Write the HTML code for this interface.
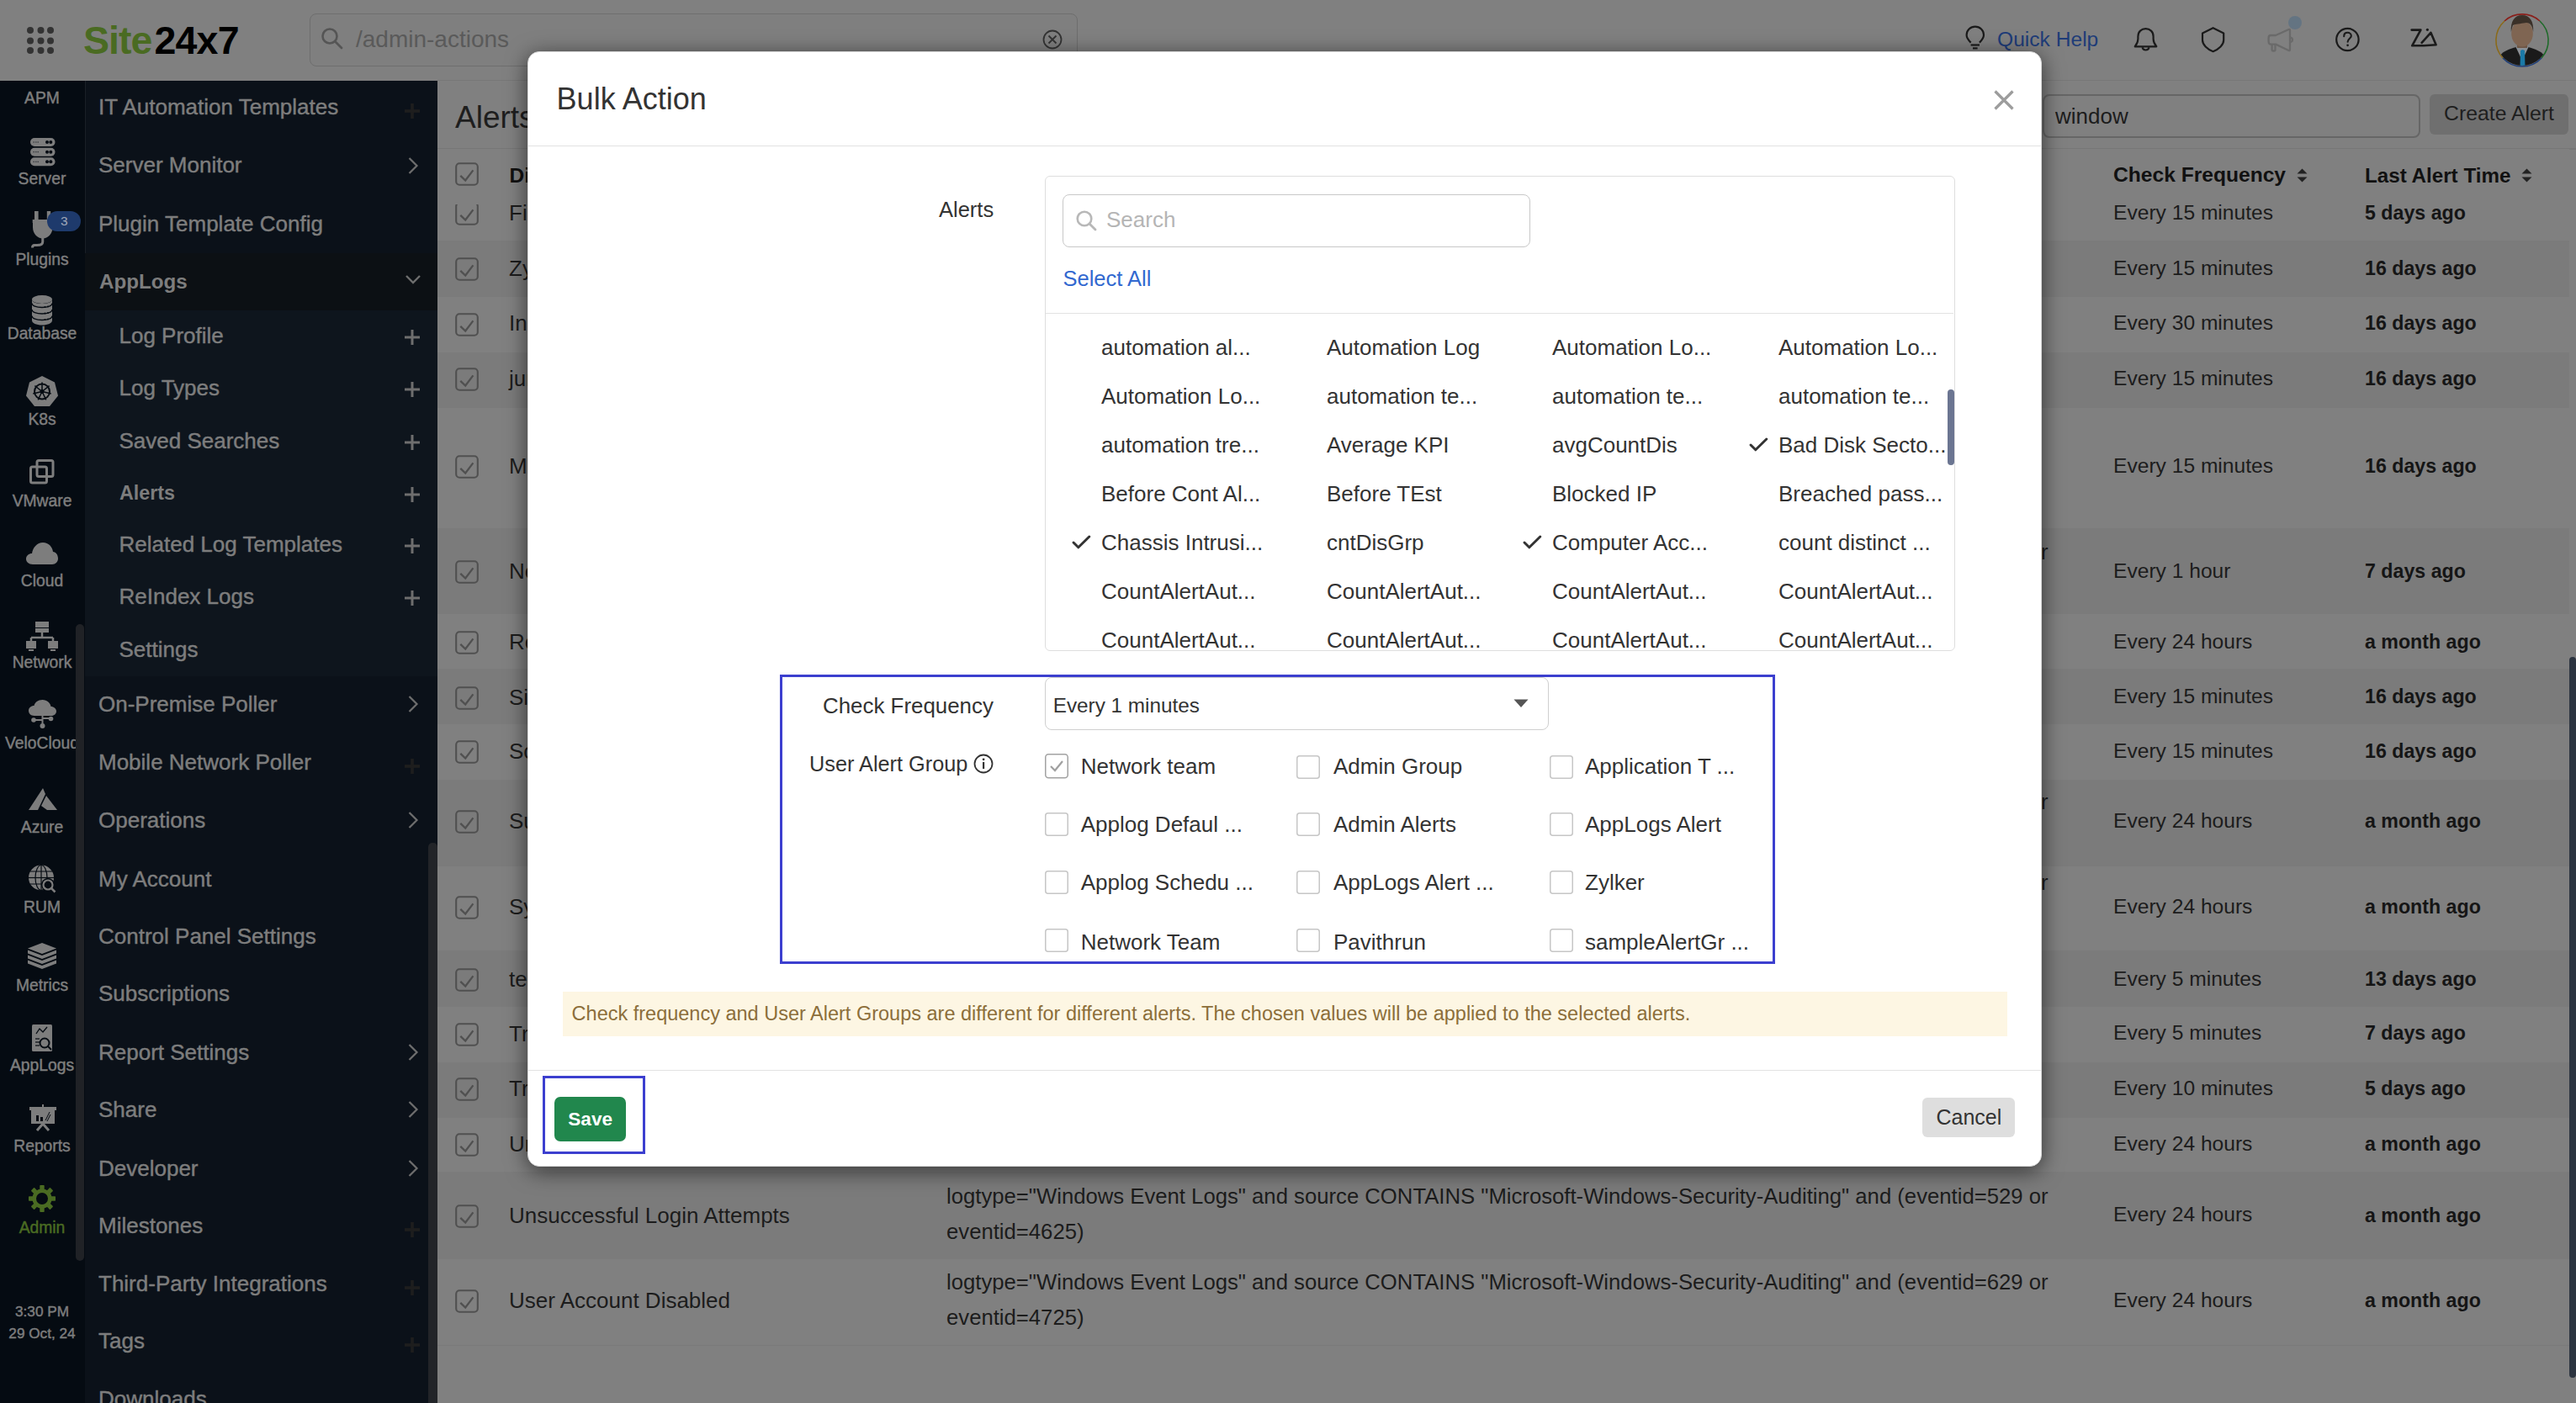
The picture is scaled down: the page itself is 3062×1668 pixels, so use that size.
<!DOCTYPE html>
<html><head><meta charset="utf-8"><title>Bulk Action</title>
<style>
html,body{margin:0;padding:0;}
body{width:3062px;height:1668px;overflow:hidden;position:relative;background:#808080;font-family:"Liberation Sans",sans-serif;}
.a{position:absolute;box-sizing:border-box;}
.t{position:absolute;white-space:nowrap;font-family:"Liberation Sans",sans-serif;}
svg.a{overflow:visible;}
</style></head><body>
<div class="a" style="left:0px;top:0px;width:3062px;height:96px;background:#808080;"></div>
<div class="a" style="left:520px;top:95px;width:2542px;height:1px;background:#777;"></div>
<svg class="a" style="left:0px;top:0px;" width="100" height="96" viewBox="0 0 100 96"><circle cx="36" cy="36" r="4" fill="#333"/><circle cx="36" cy="48.5" r="4" fill="#333"/><circle cx="36" cy="60" r="4" fill="#333"/><circle cx="48.5" cy="36" r="4" fill="#333"/><circle cx="48.5" cy="48.5" r="4" fill="#333"/><circle cx="48.5" cy="60" r="4" fill="#333"/><circle cx="60" cy="36" r="4" fill="#333"/><circle cx="60" cy="48.5" r="4" fill="#333"/><circle cx="60" cy="60" r="4" fill="#333"/></svg>
<div class="t" style="left:99px;top:25.23px;font-size:46.5px;line-height:46.5px;color:#4a6b22;font-weight:700;letter-spacing:-1px;">Site</div>
<div class="t" style="left:183.5px;top:25.23px;font-size:46.5px;line-height:46.5px;color:#000;font-weight:700;letter-spacing:-0.8px;">24x7</div>
<div class="a" style="left:368px;top:16px;width:913px;height:63px;border:1.5px solid #6e6e6e;border-radius:8px;background:#7f7f7f;"></div>
<svg class="a" style="left:380px;top:31px;" width="30" height="30" viewBox="0 0 30 30"><circle cx="12" cy="12" r="8.5" fill="none" stroke="#555" stroke-width="2.6"/><line x1="18.5" y1="18.5" x2="26" y2="26" stroke="#555" stroke-width="2.8" stroke-linecap="round"/></svg>
<div class="t" style="left:423px;top:32.69px;font-size:28px;line-height:28px;color:#5a5a5a;">/admin-actions</div>
<svg class="a" style="left:1239px;top:35px;" width="24" height="24" viewBox="0 0 24 24"><circle cx="12" cy="12" r="10.5" fill="none" stroke="#333" stroke-width="1.8"/><path d="M7.5 7.5 L16.5 16.5 M16.5 7.5 L7.5 16.5" stroke="#333" stroke-width="1.8"/></svg>
<svg class="a" style="left:2330px;top:25px;" width="36" height="40" viewBox="2330 25 36 40"><path d="M2342.7 50.6 C2339 47.2 2337.6 44.6 2337.6 41.6 C2337.6 35.9 2342.1 31.6 2347.8 31.6 C2353.5 31.6 2358 35.9 2358 41.6 C2358 44.6 2356.6 47.2 2352.9 50.6" fill="none" stroke="#1a1a1a" stroke-width="2.2"/><line x1="2342.6" y1="53.5" x2="2353" y2="53.5" stroke="#1a1a1a" stroke-width="2.2"/><line x1="2345" y1="57.4" x2="2350.6" y2="57.4" stroke="#1a1a1a" stroke-width="2.2"/></svg>
<div class="t" style="left:2374px;top:35.17px;font-size:24.6px;line-height:24.6px;color:#1e3c78;">Quick Help</div>
<svg class="a" style="left:2530px;top:28px;" width="40" height="40" viewBox="2530 28 40 40"><path d="M2537.8 55.3 L2563.3 55.3 C2561.2 52.8 2559.6 50.2 2559.6 46.3 L2559.6 43.3 C2559.6 37.8 2555.6 34.1 2550.5 34.1 C2545.4 34.1 2541.4 37.8 2541.4 43.3 L2541.4 46.3 C2541.4 50.2 2539.8 52.8 2537.8 55.3 Z" fill="none" stroke="#1a1a1a" stroke-width="2.2" stroke-linejoin="round"/><path d="M2546.6 56.3 A4 3.8 0 0 0 2554.5 56.3" fill="none" stroke="#1a1a1a" stroke-width="2.2"/></svg>
<svg class="a" style="left:2610px;top:28px;" width="40" height="40" viewBox="2610 28 40 40"><path d="M2630.6 33.2 L2643.2 39.4 L2643.2 47.5 C2643.2 53.2 2637.6 58.6 2630.6 61.2 C2623.6 58.6 2618 53.2 2618 47.5 L2618 39.4 Z" fill="none" stroke="#1a1a1a" stroke-width="2.2" stroke-linejoin="round"/></svg>
<svg class="a" style="left:2690px;top:28px;" width="40" height="40" viewBox="2690 28 40 40"><path d="M2705 42 L2720.5 35 C2721.5 34.6 2722 35.1 2722 36 L2722 59 C2722 59.9 2721.5 60.4 2720.5 60 L2705 52.6 L2699.2 52.6 C2697.3 52.6 2696.6 51.3 2696.6 49.6 L2696.6 45 C2696.6 43.3 2697.3 42 2699.2 42 Z" fill="none" stroke="#6a6a6a" stroke-width="2.3" stroke-linejoin="round"/><path d="M2700.6 52.6 L2700.6 59 C2700.6 60 2701.1 60.5 2702.1 60.5 L2703 60.5 C2704 60.5 2704.5 60 2704.5 59 L2704.5 52.6" fill="none" stroke="#6a6a6a" stroke-width="2.3"/><path d="M2722 44.6 C2724 44.6 2725 45.6 2725 47.3 C2725 49 2724 50 2722 50" fill="none" stroke="#6a6a6a" stroke-width="2.2"/></svg>
<svg class="a" style="left:2715px;top:15px;" width="30" height="30" viewBox="2715 15 30 30"><circle cx="2728" cy="27" r="8" fill="rgb(100,116,130)"/></svg>
<svg class="a" style="left:2770px;top:28px;" width="40" height="40" viewBox="2770 28 40 40"><circle cx="2790.4" cy="47" r="13.2" fill="none" stroke="#1a1a1a" stroke-width="2.2"/><path d="M2786.2 43.2 C2786.2 40.3 2788.1 38.8 2790.5 38.8 C2793 38.8 2794.8 40.5 2794.8 42.7 C2794.8 45.6 2790.6 46 2790.6 49.8" fill="none" stroke="#1a1a1a" stroke-width="2.1" stroke-linecap="round"/><circle cx="2790.6" cy="53.8" r="1.35" fill="#1a1a1a"/></svg>
<svg class="a" style="left:2860px;top:28px;" width="40" height="36" viewBox="2860 28 40 36"><path d="M2866.6 35.6 L2877.4 35.6 L2867.2 54.3 L2881 54.3 L2895.6 53.3 L2889.4 38.8 L2878.6 50.8" fill="none" stroke="#1a1a1a" stroke-width="2.6" stroke-linejoin="round" stroke-linecap="round"/><circle cx="2885.4" cy="35.3" r="1.6" fill="#1a1a1a"/></svg>
<svg class="a" style="left:2962px;top:12px;" width="72" height="72" viewBox="2962 12 72 72"><defs><clipPath id="avc"><circle cx="2998" cy="47.7" r="30.4"/></clipPath></defs>
<path d="M2977 25 A31.3 31.3 0 0 1 3019 25" fill="none" stroke="#8a1f1a" stroke-width="1.6"/>
<path d="M3019 25 A31.3 31.3 0 0 1 3021 69" fill="none" stroke="#1f6a2a" stroke-width="1.6"/>
<path d="M3021 69 A31.3 31.3 0 0 1 2975 69" fill="none" stroke="#1f3f7a" stroke-width="1.6"/>
<path d="M2975 69 A31.3 31.3 0 0 1 2977 25" fill="none" stroke="#8a6a1a" stroke-width="1.6"/>
<g clip-path="url(#avc)">
<path d="M2970 80 L2972 66 C2975 61 2983 58 2991 56 L3005 56 C3013 58 3021 61 3024 66 L3026 80 Z" fill="#1a1a1a"/>
<path d="M2990.5 56 L2998 72 L3005.5 56 Z" fill="#8a9096"/>
<path d="M2996 60 L2998.5 59 L3001 60 L3001.5 80 L2995.5 80 Z" fill="#1b7aa8"/>
<rect x="2992" y="47" width="12" height="10" fill="#6e5645"/>
<ellipse cx="2998" cy="40" rx="12.8" ry="15.5" fill="#7f6552"/>
<path d="M2984.8 38 C2984 25 2989 18 2998 18 C3007 18 3012 25 3011.2 38 C3010 31 3008 27 3003 27 C2999 28 2992 28 2987 30 C2986 33 2985.5 35 2984.8 38 Z" fill="#3a3028"/>
</g></svg>
<div class="a" style="left:0px;top:96px;width:101px;height:1572px;background:rgb(5,11,18);"></div>
<div class="a" style="left:101px;top:96px;width:419px;height:1572px;background:rgb(11,17,25);"></div>
<div class="a" style="left:101px;top:96px;width:1px;height:205px;background:rgb(26,31,38);"></div>
<div class="a" style="left:101px;top:301px;width:419px;height:68px;background:rgb(12,16,20);"></div>
<div class="a" style="left:101px;top:369px;width:419px;height:435px;background:rgb(14,21,29);"></div>
<div class="t" style="left:-150px;width:400px;text-align:center;top:106.66px;font-size:19.3px;line-height:19.3px;color:rgb(125,125,125);-webkit-text-stroke:0.45px rgb(125,125,125);">APM</div>
<div class="t" style="left:-150px;width:400px;text-align:center;top:202.66px;font-size:19.3px;line-height:19.3px;color:rgb(125,125,125);-webkit-text-stroke:0.45px rgb(125,125,125);">Server</div>
<div class="t" style="left:-150px;width:400px;text-align:center;top:298.66px;font-size:19.3px;line-height:19.3px;color:rgb(125,125,125);-webkit-text-stroke:0.45px rgb(125,125,125);">Plugins</div>
<div class="t" style="left:-150px;width:400px;text-align:center;top:386.66px;font-size:19.3px;line-height:19.3px;color:rgb(125,125,125);-webkit-text-stroke:0.45px rgb(125,125,125);">Database</div>
<div class="t" style="left:-150px;width:400px;text-align:center;top:488.66px;font-size:19.3px;line-height:19.3px;color:rgb(125,125,125);-webkit-text-stroke:0.45px rgb(125,125,125);">K8s</div>
<div class="t" style="left:-150px;width:400px;text-align:center;top:585.66px;font-size:19.3px;line-height:19.3px;color:rgb(125,125,125);-webkit-text-stroke:0.45px rgb(125,125,125);">VMware</div>
<div class="t" style="left:-150px;width:400px;text-align:center;top:681.16px;font-size:19.3px;line-height:19.3px;color:rgb(125,125,125);-webkit-text-stroke:0.45px rgb(125,125,125);">Cloud</div>
<div class="t" style="left:-150px;width:400px;text-align:center;top:777.66px;font-size:19.3px;line-height:19.3px;color:rgb(125,125,125);-webkit-text-stroke:0.45px rgb(125,125,125);">Network</div>
<div class="t" style="left:-150px;width:400px;text-align:center;top:873.66px;font-size:19.3px;line-height:19.3px;color:rgb(125,125,125);-webkit-text-stroke:0.45px rgb(125,125,125);">VeloCloud</div>
<div class="t" style="left:-150px;width:400px;text-align:center;top:973.66px;font-size:19.3px;line-height:19.3px;color:rgb(125,125,125);-webkit-text-stroke:0.45px rgb(125,125,125);">Azure</div>
<div class="t" style="left:-150px;width:400px;text-align:center;top:1069.16px;font-size:19.3px;line-height:19.3px;color:rgb(125,125,125);-webkit-text-stroke:0.45px rgb(125,125,125);">RUM</div>
<div class="t" style="left:-150px;width:400px;text-align:center;top:1161.66px;font-size:19.3px;line-height:19.3px;color:rgb(125,125,125);-webkit-text-stroke:0.45px rgb(125,125,125);">Metrics</div>
<div class="t" style="left:-150px;width:400px;text-align:center;top:1256.66px;font-size:19.3px;line-height:19.3px;color:rgb(125,125,125);-webkit-text-stroke:0.45px rgb(125,125,125);">AppLogs</div>
<div class="t" style="left:-150px;width:400px;text-align:center;top:1352.66px;font-size:19.3px;line-height:19.3px;color:rgb(125,125,125);-webkit-text-stroke:0.45px rgb(125,125,125);">Reports</div>
<div class="t" style="left:-150px;width:400px;text-align:center;top:1449.66px;font-size:19.3px;line-height:19.3px;color:rgb(74,107,34);-webkit-text-stroke:0.45px rgb(74,107,34);">Admin</div>
<div class="t" style="left:-150px;width:400px;text-align:center;top:1551.44px;font-size:17.2px;line-height:17.2px;color:rgb(125,125,125);-webkit-text-stroke:0.45px rgb(125,125,125);">3:30 PM</div>
<div class="t" style="left:-150px;width:400px;text-align:center;top:1577.44px;font-size:17.2px;line-height:17.2px;color:rgb(125,125,125);-webkit-text-stroke:0.45px rgb(125,125,125);">29 Oct, 24</div>
<svg class="a" style="left:35.5px;top:164px;" width="30" height="34" viewBox="0 0 30 34"><rect x="0" y="0" width="29.5" height="10" rx="5" fill="rgb(125,125,125)"/><circle cx="20" cy="5" r="2" fill="rgb(5,11,18)"/><circle cx="24.3" cy="5" r="2" fill="rgb(5,11,18)"/><line x1="3.5" y1="5" x2="10" y2="5" stroke="rgb(40,44,50)" stroke-width="1" stroke-dasharray="1.5 1"/><rect x="0" y="11.7" width="29.5" height="10" rx="5" fill="rgb(125,125,125)"/><circle cx="20" cy="16.7" r="2" fill="rgb(5,11,18)"/><circle cx="24.3" cy="16.7" r="2" fill="rgb(5,11,18)"/><line x1="3.5" y1="16.7" x2="10" y2="16.7" stroke="rgb(40,44,50)" stroke-width="1" stroke-dasharray="1.5 1"/><rect x="0" y="23.3" width="29.5" height="10" rx="5" fill="rgb(125,125,125)"/><circle cx="20" cy="28.3" r="2" fill="rgb(5,11,18)"/><circle cx="24.3" cy="28.3" r="2" fill="rgb(5,11,18)"/><line x1="3.5" y1="28.3" x2="10" y2="28.3" stroke="rgb(40,44,50)" stroke-width="1" stroke-dasharray="1.5 1"/></svg>
<svg class="a" style="left:36px;top:251px;" width="30" height="45" viewBox="0 0 30 45"><rect x="5" y="0" width="4.6" height="11" fill="rgb(125,125,125)"/><rect x="19.8" y="0" width="4.4" height="11" fill="rgb(125,125,125)"/><rect x="2.7" y="10" width="24.1" height="4" fill="rgb(125,125,125)"/><path d="M3 14 L26.5 14 L26.5 19 C26.5 27 21 32.5 14.75 32.5 C8.5 32.5 3 27 3 19 Z" fill="rgb(125,125,125)"/><path d="M14.75 31 L14.75 36.5 C14.75 39.5 12 40.5 8 40.5 L5 40.5 C3.5 40.5 2.5 41.5 2.5 43.5" fill="none" stroke="rgb(125,125,125)" stroke-width="3"/></svg>
<div class="a" style="left:56px;top:251px;width:40px;height:24px;background:rgb(30,58,108);border-radius:12px;"></div>
<div class="t" style="left:-123.7px;width:400px;text-align:center;top:255.48px;font-size:15.5px;line-height:15.5px;color:rgb(160,168,185);">3</div>
<svg class="a" style="left:38px;top:351px;" width="24" height="36" viewBox="0 0 24 36"><ellipse cx="12" cy="5" rx="12" ry="5" fill="rgb(125,125,125)"/><path d="M0 5 L0 30 C0 33 5 35.5 12 35.5 C19 35.5 24 33 24 30 L24 5 C24 8 19 10 12 10 C5 10 0 8 0 5 Z" fill="rgb(125,125,125)"/><path d="M0 9.5 C0 12.5 5 14.5 12 14.5 C19 14.5 24 12.5 24 9.5" fill="none" stroke="rgb(5,11,18)" stroke-width="1.3"/><circle cx="19" cy="13.5" r="1" fill="rgb(5,11,18)"/><circle cx="15.5" cy="14.1" r="1" fill="rgb(5,11,18)"/><path d="M0 17 C0 20 5 22 12 22 C19 22 24 20 24 17" fill="none" stroke="rgb(5,11,18)" stroke-width="1.3"/><circle cx="19" cy="21" r="1" fill="rgb(5,11,18)"/><circle cx="15.5" cy="21.6" r="1" fill="rgb(5,11,18)"/><path d="M0 24.5 C0 27.5 5 29.5 12 29.5 C19 29.5 24 27.5 24 24.5" fill="none" stroke="rgb(5,11,18)" stroke-width="1.3"/><circle cx="19" cy="28.5" r="1" fill="rgb(5,11,18)"/><circle cx="15.5" cy="29.1" r="1" fill="rgb(5,11,18)"/></svg>
<svg class="a" style="left:31px;top:447px;" width="38" height="36" viewBox="0 0 38 36"><path d="M19 0 L34 7.5 L38 23.5 L28 36 L10 36 L0 23.5 L4 7.5 Z" fill="rgb(125,125,125)"/><circle cx="19" cy="18.5" r="9" fill="none" stroke="rgb(5,11,18)" stroke-width="2"/><circle cx="19" cy="18.5" r="2.5" fill="rgb(5,11,18)"/><line x1="19" y1="18.5" x2="19.0" y2="7.5" stroke="rgb(5,11,18)" stroke-width="1.5"/><line x1="19" y1="18.5" x2="27.600160702709466" y2="11.641630231055498" stroke="rgb(5,11,18)" stroke-width="1.5"/><line x1="19" y1="18.5" x2="29.72419675845947" y2="20.947775293168753" stroke="rgb(5,11,18)" stroke-width="1.5"/><line x1="19" y1="18.5" x2="23.772658723550723" y2="28.41068760018775" stroke="rgb(5,11,18)" stroke-width="1.5"/><line x1="19" y1="18.5" x2="14.227195661011358" y2="28.410617475300477" stroke="rgb(5,11,18)" stroke-width="1.5"/><line x1="19" y1="18.5" x2="8.275767277975302" y2="20.947617724207504" stroke="rgb(5,11,18)" stroke-width="1.5"/><line x1="19" y1="18.5" x2="10.399940067014175" y2="11.641503871179058" stroke="rgb(5,11,18)" stroke-width="1.5"/></svg>
<svg class="a" style="left:35px;top:546px;" width="30" height="30" viewBox="0 0 30 30"><rect x="9" y="1.5" width="19" height="19" rx="2" fill="none" stroke="rgb(125,125,125)" stroke-width="3"/><rect x="1.5" y="9" width="19" height="19" rx="2" fill="none" stroke="rgb(125,125,125)" stroke-width="3"/></svg>
<svg class="a" style="left:31px;top:645px;" width="38" height="26" viewBox="0 0 38 26"><path d="M8 26 C3 26 0 23 0 19.5 C0 15.5 3.5 13 7 13 C8 6 13 0 20 0 C27 0 31 5 32 11 C35.5 11.5 38 14.5 38 19 C38 23 35 26 31 26 Z" fill="rgb(125,125,125)"/></svg>
<svg class="a" style="left:31px;top:739px;" width="38" height="36" viewBox="0 0 38 36"><rect x="11" y="0" width="16" height="7" fill="rgb(125,125,125)"/><rect x="11" y="8" width="16" height="5" fill="rgb(125,125,125)"/><line x1="19" y1="13" x2="19" y2="20" stroke="rgb(125,125,125)" stroke-width="2.5"/><line x1="6" y1="19" x2="32" y2="19" stroke="rgb(125,125,125)" stroke-width="2.5"/><line x1="6" y1="19" x2="6" y2="24" stroke="rgb(125,125,125)" stroke-width="2.5"/><line x1="32" y1="19" x2="32" y2="24" stroke="rgb(125,125,125)" stroke-width="2.5"/><rect x="0" y="23" width="12" height="9" fill="rgb(125,125,125)"/><rect x="26" y="23" width="12" height="9" fill="rgb(125,125,125)"/><line x1="3" y1="34" x2="9" y2="34" stroke="rgb(125,125,125)" stroke-width="2"/><line x1="29" y1="34" x2="35" y2="34" stroke="rgb(125,125,125)" stroke-width="2"/></svg>
<svg class="a" style="left:34px;top:832px;" width="33" height="35" viewBox="0 0 33 35"><path d="M7 19 C2.5 19 0 16 0 13 C0 9.5 3 7 6.5 7 C7.5 3 11 0 16.5 0 C22 0 26 4 26.5 8 C30 8 33 10.5 33 13.5 C33 16.5 30.5 19 27 19 Z" fill="rgb(125,125,125)"/><line x1="16.5" y1="18" x2="16.5" y2="30" stroke="rgb(125,125,125)" stroke-width="2"/><circle cx="16.5" cy="31" r="3" fill="rgb(125,125,125)"/><path d="M16.5 24 L7 24" stroke="rgb(125,125,125)" stroke-width="2"/><circle cx="6" cy="24" r="2.8" fill="rgb(125,125,125)"/><path d="M16.5 22 L26 22" stroke="rgb(125,125,125)" stroke-width="2"/><circle cx="26.5" cy="22.5" r="2.8" fill="rgb(125,125,125)"/></svg>
<svg class="a" style="left:34px;top:937px;" width="34" height="27" viewBox="0 0 34 27"><path d="M17 0 L0 26 L11 26 L20 7 Z" fill="rgb(125,125,125)"/><path d="M21 9 L15 21 L22 26 L34 26 Z" fill="rgb(125,125,125)"/></svg>
<svg class="a" style="left:34px;top:1028px;" width="34" height="34" viewBox="0 0 34 34"><circle cx="15" cy="15.5" r="15" fill="rgb(125,125,125)"/><g stroke="rgb(5,11,18)" stroke-width="1.2" fill="none"><ellipse cx="15" cy="15.5" rx="7" ry="15"/><line x1="15" y1="0.5" x2="15" y2="30.5"/><line x1="0" y1="15.5" x2="30" y2="15.5"/><path d="M2 8 L28 8 M2 23 L28 23"/></g><circle cx="23" cy="24" r="8" fill="rgb(5,11,18)"/><circle cx="23" cy="24" r="5.5" fill="none" stroke="rgb(125,125,125)" stroke-width="2.2"/><line x1="27" y1="28" x2="31.5" y2="32.5" stroke="rgb(125,125,125)" stroke-width="2.5"/></svg>
<svg class="a" style="left:33px;top:1121px;" width="34" height="33" viewBox="0 0 34 33"><path d="M17 0 L34 6.5 L17 13 L0 6.5 Z" fill="rgb(125,125,125)"/><path d="M0 8.5 L17 15.0 L34 8.5 L34 12.5 L17 19.0 L0 12.5 Z" fill="rgb(125,125,125)"/><path d="M0 14.5 L17 21.0 L34 14.5 L34 18.5 L17 25.0 L0 18.5 Z" fill="rgb(125,125,125)"/><path d="M0 20.5 L17 27.0 L34 20.5 L34 24.5 L17 31.0 L0 24.5 Z" fill="rgb(125,125,125)"/></svg>
<svg class="a" style="left:38px;top:1218px;" width="24" height="32" viewBox="0 0 24 32"><rect x="0" y="0" width="24" height="32" rx="1.5" fill="rgb(125,125,125)"/><path d="M5 11 L9 5 L13 9 L18 3" fill="none" stroke="rgb(5,11,18)" stroke-width="1.3"/><line x1="4" y1="17" x2="9" y2="17" stroke="rgb(5,11,18)" stroke-width="1.2"/><line x1="4" y1="21" x2="9" y2="21" stroke="rgb(5,11,18)" stroke-width="1.2"/><line x1="4" y1="25" x2="9" y2="25" stroke="rgb(5,11,18)" stroke-width="1.2"/><circle cx="15" cy="22" r="5.5" fill="none" stroke="rgb(5,11,18)" stroke-width="2"/><line x1="19" y1="26" x2="23" y2="30" stroke="rgb(5,11,18)" stroke-width="2"/></svg>
<svg class="a" style="left:35px;top:1313px;" width="32" height="32" viewBox="0 0 32 32"><rect x="0" y="3" width="32" height="4" fill="rgb(125,125,125)"/><rect x="2" y="6" width="28" height="17" fill="rgb(125,125,125)"/><rect x="15" y="0" width="2" height="4" fill="rgb(125,125,125)"/><rect x="8" y="13" width="3" height="7" fill="rgb(5,11,18)"/><rect x="13" y="15" width="3" height="5" fill="rgb(5,11,18)"/><path d="M19 19 L24 9 M21 20 L25 12" stroke="rgb(5,11,18)" stroke-width="1"/><path d="M16 23 L9 31 M16 23 L23 31" stroke="rgb(125,125,125)" stroke-width="3"/></svg>
<svg class="a" style="left:34px;top:1409px;" width="32" height="32" viewBox="0 0 32 32"><g fill="rgb(74,107,34)"><rect x="13.3" y="0" width="5.4" height="7" rx="0.8" transform="rotate(0 16 16)"/><rect x="13.3" y="0" width="5.4" height="7" rx="0.8" transform="rotate(45 16 16)"/><rect x="13.3" y="0" width="5.4" height="7" rx="0.8" transform="rotate(90 16 16)"/><rect x="13.3" y="0" width="5.4" height="7" rx="0.8" transform="rotate(135 16 16)"/><rect x="13.3" y="0" width="5.4" height="7" rx="0.8" transform="rotate(180 16 16)"/><rect x="13.3" y="0" width="5.4" height="7" rx="0.8" transform="rotate(225 16 16)"/><rect x="13.3" y="0" width="5.4" height="7" rx="0.8" transform="rotate(270 16 16)"/><rect x="13.3" y="0" width="5.4" height="7" rx="0.8" transform="rotate(315 16 16)"/></g><circle cx="16" cy="16" r="9.3" fill="none" stroke="rgb(74,107,34)" stroke-width="4.6"/></svg>
<div class="a" style="left:90px;top:742px;width:10px;height:757px;background:rgb(32,34,38);border-radius:5px;"></div>
<div class="t" style="left:117px;top:113.99px;font-size:26px;line-height:26px;color:rgb(125,125,125);-webkit-text-stroke:0.45px rgb(125,125,125);">IT Automation Templates</div>
<svg class="a" style="left:481px;top:123px;" width="18" height="18" viewBox="0 0 18 18"><rect x="7.2" y="0" width="3.6" height="18" fill="rgb(30,30,30)"/><rect x="0" y="7.2" width="18" height="3.6" fill="rgb(30,30,30)"/></svg>
<div class="t" style="left:117px;top:183.49px;font-size:26px;line-height:26px;color:rgb(125,125,125);-webkit-text-stroke:0.45px rgb(125,125,125);">Server Monitor</div>
<svg class="a" style="left:484px;top:185.5px;" width="14" height="22" viewBox="0 0 14 22"><path d="M2.5 2 L11.5 11 L2.5 20" fill="none" stroke="rgb(110,110,110)" stroke-width="2.2"/></svg>
<div class="t" style="left:117px;top:252.99px;font-size:26px;line-height:26px;color:rgb(125,125,125);-webkit-text-stroke:0.45px rgb(125,125,125);">Plugin Template Config</div>
<div class="t" style="left:117px;top:823.99px;font-size:26px;line-height:26px;color:rgb(125,125,125);-webkit-text-stroke:0.45px rgb(125,125,125);">On-Premise Poller</div>
<svg class="a" style="left:484px;top:826px;" width="14" height="22" viewBox="0 0 14 22"><path d="M2.5 2 L11.5 11 L2.5 20" fill="none" stroke="rgb(110,110,110)" stroke-width="2.2"/></svg>
<div class="t" style="left:117px;top:892.99px;font-size:26px;line-height:26px;color:rgb(125,125,125);-webkit-text-stroke:0.45px rgb(125,125,125);">Mobile Network Poller</div>
<svg class="a" style="left:481px;top:902px;" width="18" height="18" viewBox="0 0 18 18"><rect x="7.2" y="0" width="3.6" height="18" fill="rgb(30,30,30)"/><rect x="0" y="7.2" width="18" height="3.6" fill="rgb(30,30,30)"/></svg>
<div class="t" style="left:117px;top:961.99px;font-size:26px;line-height:26px;color:rgb(125,125,125);-webkit-text-stroke:0.45px rgb(125,125,125);">Operations</div>
<svg class="a" style="left:484px;top:964px;" width="14" height="22" viewBox="0 0 14 22"><path d="M2.5 2 L11.5 11 L2.5 20" fill="none" stroke="rgb(110,110,110)" stroke-width="2.2"/></svg>
<div class="t" style="left:117px;top:1031.99px;font-size:26px;line-height:26px;color:rgb(125,125,125);-webkit-text-stroke:0.45px rgb(125,125,125);">My Account</div>
<div class="t" style="left:117px;top:1100.49px;font-size:26px;line-height:26px;color:rgb(125,125,125);-webkit-text-stroke:0.45px rgb(125,125,125);">Control Panel Settings</div>
<div class="t" style="left:117px;top:1167.99px;font-size:26px;line-height:26px;color:rgb(125,125,125);-webkit-text-stroke:0.45px rgb(125,125,125);">Subscriptions</div>
<div class="t" style="left:117px;top:1237.99px;font-size:26px;line-height:26px;color:rgb(125,125,125);-webkit-text-stroke:0.45px rgb(125,125,125);">Report Settings</div>
<svg class="a" style="left:484px;top:1240px;" width="14" height="22" viewBox="0 0 14 22"><path d="M2.5 2 L11.5 11 L2.5 20" fill="none" stroke="rgb(110,110,110)" stroke-width="2.2"/></svg>
<div class="t" style="left:117px;top:1305.99px;font-size:26px;line-height:26px;color:rgb(125,125,125);-webkit-text-stroke:0.45px rgb(125,125,125);">Share</div>
<svg class="a" style="left:484px;top:1308px;" width="14" height="22" viewBox="0 0 14 22"><path d="M2.5 2 L11.5 11 L2.5 20" fill="none" stroke="rgb(110,110,110)" stroke-width="2.2"/></svg>
<div class="t" style="left:117px;top:1375.99px;font-size:26px;line-height:26px;color:rgb(125,125,125);-webkit-text-stroke:0.45px rgb(125,125,125);">Developer</div>
<svg class="a" style="left:484px;top:1378px;" width="14" height="22" viewBox="0 0 14 22"><path d="M2.5 2 L11.5 11 L2.5 20" fill="none" stroke="rgb(110,110,110)" stroke-width="2.2"/></svg>
<div class="t" style="left:117px;top:1443.99px;font-size:26px;line-height:26px;color:rgb(125,125,125);-webkit-text-stroke:0.45px rgb(125,125,125);">Milestones</div>
<svg class="a" style="left:481px;top:1453px;" width="18" height="18" viewBox="0 0 18 18"><rect x="7.2" y="0" width="3.6" height="18" fill="rgb(30,30,30)"/><rect x="0" y="7.2" width="18" height="3.6" fill="rgb(30,30,30)"/></svg>
<div class="t" style="left:117px;top:1512.99px;font-size:26px;line-height:26px;color:rgb(125,125,125);-webkit-text-stroke:0.45px rgb(125,125,125);">Third-Party Integrations</div>
<svg class="a" style="left:481px;top:1522px;" width="18" height="18" viewBox="0 0 18 18"><rect x="7.2" y="0" width="3.6" height="18" fill="rgb(30,30,30)"/><rect x="0" y="7.2" width="18" height="3.6" fill="rgb(30,30,30)"/></svg>
<div class="t" style="left:117px;top:1580.99px;font-size:26px;line-height:26px;color:rgb(125,125,125);-webkit-text-stroke:0.45px rgb(125,125,125);">Tags</div>
<svg class="a" style="left:481px;top:1590px;" width="18" height="18" viewBox="0 0 18 18"><rect x="7.2" y="0" width="3.6" height="18" fill="rgb(30,30,30)"/><rect x="0" y="7.2" width="18" height="3.6" fill="rgb(30,30,30)"/></svg>
<div class="t" style="left:117px;top:1649.99px;font-size:26px;line-height:26px;color:rgb(125,125,125);-webkit-text-stroke:0.45px rgb(125,125,125);">Downloads</div>
<div class="t" style="left:118px;top:323.21px;font-size:24.2px;line-height:24.2px;color:rgb(125,125,125);font-weight:700;">AppLogs</div>
<svg class="a" style="left:481px;top:325px;" width="20" height="14" viewBox="0 0 20 14"><path d="M2 3 L10 11 L18 3" fill="none" stroke="rgb(110,110,110)" stroke-width="2.4"/></svg>
<div class="t" style="left:141.5px;top:385.99px;font-size:26px;line-height:26px;color:rgb(125,125,125);-webkit-text-stroke:0.45px rgb(125,125,125);">Log Profile</div>
<svg class="a" style="left:481px;top:392px;" width="18" height="18" viewBox="0 0 18 18"><rect x="7.5" y="0" width="3" height="18" fill="rgb(110,110,110)"/><rect x="0" y="7.5" width="18" height="3" fill="rgb(110,110,110)"/></svg>
<div class="t" style="left:141.5px;top:447.99px;font-size:26px;line-height:26px;color:rgb(125,125,125);-webkit-text-stroke:0.45px rgb(125,125,125);">Log Types</div>
<svg class="a" style="left:481px;top:454px;" width="18" height="18" viewBox="0 0 18 18"><rect x="7.5" y="0" width="3" height="18" fill="rgb(110,110,110)"/><rect x="0" y="7.5" width="18" height="3" fill="rgb(110,110,110)"/></svg>
<div class="t" style="left:141.5px;top:510.99px;font-size:26px;line-height:26px;color:rgb(125,125,125);-webkit-text-stroke:0.45px rgb(125,125,125);">Saved Searches</div>
<svg class="a" style="left:481px;top:517px;" width="18" height="18" viewBox="0 0 18 18"><rect x="7.5" y="0" width="3" height="18" fill="rgb(110,110,110)"/><rect x="0" y="7.5" width="18" height="3" fill="rgb(110,110,110)"/></svg>
<div class="t" style="left:142px;top:575.27px;font-size:23.3px;line-height:23.3px;color:rgb(125,125,125);font-weight:700;">Alerts</div>
<svg class="a" style="left:481px;top:579px;" width="18" height="18" viewBox="0 0 18 18"><rect x="7.5" y="0" width="3" height="18" fill="rgb(110,110,110)"/><rect x="0" y="7.5" width="18" height="3" fill="rgb(110,110,110)"/></svg>
<div class="t" style="left:141.5px;top:633.99px;font-size:26px;line-height:26px;color:rgb(125,125,125);-webkit-text-stroke:0.45px rgb(125,125,125);">Related Log Templates</div>
<svg class="a" style="left:481px;top:640px;" width="18" height="18" viewBox="0 0 18 18"><rect x="7.5" y="0" width="3" height="18" fill="rgb(110,110,110)"/><rect x="0" y="7.5" width="18" height="3" fill="rgb(110,110,110)"/></svg>
<div class="t" style="left:141.5px;top:695.99px;font-size:26px;line-height:26px;color:rgb(125,125,125);-webkit-text-stroke:0.45px rgb(125,125,125);">ReIndex Logs</div>
<svg class="a" style="left:481px;top:702px;" width="18" height="18" viewBox="0 0 18 18"><rect x="7.5" y="0" width="3" height="18" fill="rgb(110,110,110)"/><rect x="0" y="7.5" width="18" height="3" fill="rgb(110,110,110)"/></svg>
<div class="t" style="left:141.5px;top:758.99px;font-size:26px;line-height:26px;color:rgb(125,125,125);-webkit-text-stroke:0.45px rgb(125,125,125);">Settings</div>
<div class="a" style="left:509px;top:1002px;width:11px;height:700px;background:rgb(34,36,40);border-radius:5px;"></div>
<div class="a" style="left:520px;top:96px;width:2542px;height:1572px;background:#808080;"></div>
<div class="t" style="left:541px;top:120.67px;font-size:37px;line-height:37px;color:#1e1e1e;">Alerts</div>
<div class="a" style="left:520px;top:176px;width:2542px;height:1.5px;background:#777;"></div>
<div class="a" style="left:2428px;top:112px;width:449px;height:52px;border:2px solid #666;border-radius:8px;"></div>
<div class="t" style="left:2443px;top:124.99px;font-size:26px;line-height:26px;color:#1c1c1c;">window</div>
<div class="a" style="left:2888px;top:112px;width:165px;height:48px;background:#6f6f6f;border-radius:6px;"></div>
<div class="t" style="left:2905px;top:123.00px;font-size:24.8px;line-height:24.8px;color:#1e1e1e;">Create Alert</div>
<div class="a" style="left:520px;top:286px;width:2534px;height:67px;background:#7b7b7b;"></div>
<div class="a" style="left:520px;top:419px;width:2534px;height:66px;background:#7b7b7b;"></div>
<div class="a" style="left:520px;top:628px;width:2534px;height:102px;background:#7b7b7b;"></div>
<div class="a" style="left:520px;top:795px;width:2534px;height:66px;background:#7b7b7b;"></div>
<div class="a" style="left:520px;top:927px;width:2534px;height:103px;background:#7b7b7b;"></div>
<div class="a" style="left:520px;top:1130px;width:2534px;height:67px;background:#7b7b7b;"></div>
<div class="a" style="left:520px;top:1263px;width:2534px;height:66px;background:#7b7b7b;"></div>
<div class="a" style="left:520px;top:1393px;width:2534px;height:104px;background:#7b7b7b;"></div>
<div class="a" style="left:520px;top:177px;width:2534px;height:65px;background:#808080;"></div>
<svg class="a" style="left:541px;top:192.5px;" width="28" height="28" viewBox="0 0 28 28"><rect x="1.2" y="1.2" width="25.6" height="25.6" rx="4" fill="none" stroke="#505050" stroke-width="2.1"/><path d="M6.3 15.8 L12.2 21.5 L21.4 9.4" fill="none" stroke="#505050" stroke-width="2.3"/></svg>
<div class="t" style="left:605.5px;top:197.26px;font-size:24.5px;line-height:24.5px;color:#111;font-weight:700;">Display Name</div>
<div class="t" style="left:2512px;top:196.17px;font-size:24.6px;line-height:24.6px;color:#111;font-weight:700;">Check Frequency</div>
<div class="t" style="left:2811px;top:196.51px;font-size:24.2px;line-height:24.2px;color:#111;font-weight:700;">Last Alert Time</div>
<svg class="a" style="left:2730px;top:200px;" width="13" height="17" viewBox="0 0 13 17"><path d="M6.5 0.5 L12.5 6.5 L0.5 6.5 Z" fill="#222"/><path d="M6.5 16.5 L12.5 10.5 L0.5 10.5 Z" fill="#222"/></svg>
<svg class="a" style="left:2997px;top:200px;" width="13" height="17" viewBox="0 0 13 17"><path d="M6.5 0.5 L12.5 6.5 L0.5 6.5 Z" fill="#222"/><path d="M6.5 16.5 L12.5 10.5 L0.5 10.5 Z" fill="#222"/></svg>
<div class="a" style="left:520px;top:243px;width:100px;height:43px;overflow:hidden;">
<svg class="a" style="left:21px;top:-3px;" width="28" height="28" viewBox="0 0 28 28"><rect x="1.2" y="1.2" width="25.6" height="25.6" rx="4" fill="none" stroke="#505050" stroke-width="2.1"/><path d="M6.3 15.8 L12.2 21.5 L21.4 9.4" fill="none" stroke="#505050" stroke-width="2.3"/></svg>
</div>
<div class="t" style="left:605px;top:239.99px;font-size:26px;line-height:26px;color:#1c1c1c;">File Integrity Monitoring</div>
<div class="t" style="left:2512px;top:240.67px;font-size:24.6px;line-height:24.6px;color:#1c1c1c;">Every 15 minutes</div>
<div class="t" style="left:2811px;top:241.86px;font-size:23.2px;line-height:23.2px;color:#151515;font-weight:700;">5 days ago</div>
<svg class="a" style="left:541px;top:306.2px;" width="28" height="28" viewBox="0 0 28 28"><rect x="1.2" y="1.2" width="25.6" height="25.6" rx="4" fill="none" stroke="#505050" stroke-width="2.1"/><path d="M6.3 15.8 L12.2 21.5 L21.4 9.4" fill="none" stroke="#505050" stroke-width="2.3"/></svg>
<div class="t" style="left:605px;top:305.99px;font-size:26px;line-height:26px;color:#1c1c1c;">Zylker Logs</div>
<div class="t" style="left:2512px;top:306.67px;font-size:24.6px;line-height:24.6px;color:#1c1c1c;">Every 15 minutes</div>
<div class="t" style="left:2811px;top:307.86px;font-size:23.2px;line-height:23.2px;color:#151515;font-weight:700;">16 days ago</div>
<svg class="a" style="left:541px;top:371.7px;" width="28" height="28" viewBox="0 0 28 28"><rect x="1.2" y="1.2" width="25.6" height="25.6" rx="4" fill="none" stroke="#505050" stroke-width="2.1"/><path d="M6.3 15.8 L12.2 21.5 L21.4 9.4" fill="none" stroke="#505050" stroke-width="2.3"/></svg>
<div class="t" style="left:605px;top:371.49px;font-size:26px;line-height:26px;color:#1c1c1c;">Insufficient Space</div>
<div class="t" style="left:2512px;top:372.17px;font-size:24.6px;line-height:24.6px;color:#1c1c1c;">Every 30 minutes</div>
<div class="t" style="left:2811px;top:373.36px;font-size:23.2px;line-height:23.2px;color:#151515;font-weight:700;">16 days ago</div>
<svg class="a" style="left:541px;top:437.2px;" width="28" height="28" viewBox="0 0 28 28"><rect x="1.2" y="1.2" width="25.6" height="25.6" rx="4" fill="none" stroke="#505050" stroke-width="2.1"/><path d="M6.3 15.8 L12.2 21.5 L21.4 9.4" fill="none" stroke="#505050" stroke-width="2.3"/></svg>
<div class="t" style="left:605px;top:436.99px;font-size:26px;line-height:26px;color:#1c1c1c;">junk alert</div>
<div class="t" style="left:2512px;top:437.67px;font-size:24.6px;line-height:24.6px;color:#1c1c1c;">Every 15 minutes</div>
<div class="t" style="left:2811px;top:438.86px;font-size:23.2px;line-height:23.2px;color:#151515;font-weight:700;">16 days ago</div>
<svg class="a" style="left:541px;top:541.2px;" width="28" height="28" viewBox="0 0 28 28"><rect x="1.2" y="1.2" width="25.6" height="25.6" rx="4" fill="none" stroke="#505050" stroke-width="2.1"/><path d="M6.3 15.8 L12.2 21.5 L21.4 9.4" fill="none" stroke="#505050" stroke-width="2.3"/></svg>
<div class="t" style="left:605px;top:540.99px;font-size:26px;line-height:26px;color:#1c1c1c;">Malware Detected</div>
<div class="t" style="left:2512px;top:541.67px;font-size:24.6px;line-height:24.6px;color:#1c1c1c;">Every 15 minutes</div>
<div class="t" style="left:2811px;top:542.86px;font-size:23.2px;line-height:23.2px;color:#151515;font-weight:700;">16 days ago</div>
<svg class="a" style="left:541px;top:666.2px;" width="28" height="28" viewBox="0 0 28 28"><rect x="1.2" y="1.2" width="25.6" height="25.6" rx="4" fill="none" stroke="#505050" stroke-width="2.1"/><path d="M6.3 15.8 L12.2 21.5 L21.4 9.4" fill="none" stroke="#505050" stroke-width="2.3"/></svg>
<div class="t" style="left:605px;top:665.99px;font-size:26px;line-height:26px;color:#1c1c1c;">New Service Installed</div>
<div class="t" style="left:2512px;top:666.67px;font-size:24.6px;line-height:24.6px;color:#1c1c1c;">Every 1 hour</div>
<div class="t" style="left:2811px;top:667.86px;font-size:23.2px;line-height:23.2px;color:#151515;font-weight:700;">7 days ago</div>
<div class="t" style="left:1125px;top:644.24px;font-size:25.7px;line-height:25.7px;color:#1c1c1c;">logtype="Windows Event Logs" and source CONTAINS "Microsoft-Windows-Security-Auditing" and (eventid=529 or</div>
<div class="t" style="left:1125px;top:686.24px;font-size:25.7px;line-height:25.7px;color:#1c1c1c;">eventid=4625)</div>
<svg class="a" style="left:541px;top:750.2px;" width="28" height="28" viewBox="0 0 28 28"><rect x="1.2" y="1.2" width="25.6" height="25.6" rx="4" fill="none" stroke="#505050" stroke-width="2.1"/><path d="M6.3 15.8 L12.2 21.5 L21.4 9.4" fill="none" stroke="#505050" stroke-width="2.3"/></svg>
<div class="t" style="left:605px;top:749.99px;font-size:26px;line-height:26px;color:#1c1c1c;">Registry Changes</div>
<div class="t" style="left:2512px;top:750.67px;font-size:24.6px;line-height:24.6px;color:#1c1c1c;">Every 24 hours</div>
<div class="t" style="left:2811px;top:751.86px;font-size:23.2px;line-height:23.2px;color:#151515;font-weight:700;">a month ago</div>
<svg class="a" style="left:541px;top:815.8000000000001px;" width="28" height="28" viewBox="0 0 28 28"><rect x="1.2" y="1.2" width="25.6" height="25.6" rx="4" fill="none" stroke="#505050" stroke-width="2.1"/><path d="M6.3 15.8 L12.2 21.5 L21.4 9.4" fill="none" stroke="#505050" stroke-width="2.3"/></svg>
<div class="t" style="left:605px;top:815.59px;font-size:26px;line-height:26px;color:#1c1c1c;">Signin Failures</div>
<div class="t" style="left:2512px;top:816.27px;font-size:24.6px;line-height:24.6px;color:#1c1c1c;">Every 15 minutes</div>
<div class="t" style="left:2811px;top:817.46px;font-size:23.2px;line-height:23.2px;color:#151515;font-weight:700;">16 days ago</div>
<svg class="a" style="left:541px;top:880.2px;" width="28" height="28" viewBox="0 0 28 28"><rect x="1.2" y="1.2" width="25.6" height="25.6" rx="4" fill="none" stroke="#505050" stroke-width="2.1"/><path d="M6.3 15.8 L12.2 21.5 L21.4 9.4" fill="none" stroke="#505050" stroke-width="2.3"/></svg>
<div class="t" style="left:605px;top:879.99px;font-size:26px;line-height:26px;color:#1c1c1c;">Scheduled Task</div>
<div class="t" style="left:2512px;top:880.67px;font-size:24.6px;line-height:24.6px;color:#1c1c1c;">Every 15 minutes</div>
<div class="t" style="left:2811px;top:881.86px;font-size:23.2px;line-height:23.2px;color:#151515;font-weight:700;">16 days ago</div>
<svg class="a" style="left:541px;top:963.2px;" width="28" height="28" viewBox="0 0 28 28"><rect x="1.2" y="1.2" width="25.6" height="25.6" rx="4" fill="none" stroke="#505050" stroke-width="2.1"/><path d="M6.3 15.8 L12.2 21.5 L21.4 9.4" fill="none" stroke="#505050" stroke-width="2.3"/></svg>
<div class="t" style="left:605px;top:962.99px;font-size:26px;line-height:26px;color:#1c1c1c;">Successful Logon</div>
<div class="t" style="left:2512px;top:963.67px;font-size:24.6px;line-height:24.6px;color:#1c1c1c;">Every 24 hours</div>
<div class="t" style="left:2811px;top:964.86px;font-size:23.2px;line-height:23.2px;color:#151515;font-weight:700;">a month ago</div>
<div class="t" style="left:1125px;top:941.24px;font-size:25.7px;line-height:25.7px;color:#1c1c1c;">logtype="Windows Event Logs" and source CONTAINS "Microsoft-Windows-Security-Auditing" and (eventid=529 or</div>
<div class="t" style="left:1125px;top:983.24px;font-size:25.7px;line-height:25.7px;color:#1c1c1c;">eventid=4625)</div>
<svg class="a" style="left:541px;top:1065.2px;" width="28" height="28" viewBox="0 0 28 28"><rect x="1.2" y="1.2" width="25.6" height="25.6" rx="4" fill="none" stroke="#505050" stroke-width="2.1"/><path d="M6.3 15.8 L12.2 21.5 L21.4 9.4" fill="none" stroke="#505050" stroke-width="2.3"/></svg>
<div class="t" style="left:605px;top:1064.99px;font-size:26px;line-height:26px;color:#1c1c1c;">System Restart</div>
<div class="t" style="left:2512px;top:1065.67px;font-size:24.6px;line-height:24.6px;color:#1c1c1c;">Every 24 hours</div>
<div class="t" style="left:2811px;top:1066.86px;font-size:23.2px;line-height:23.2px;color:#151515;font-weight:700;">a month ago</div>
<div class="t" style="left:1125px;top:1037.24px;font-size:25.7px;line-height:25.7px;color:#1c1c1c;">logtype="Windows Event Logs" and source CONTAINS "Microsoft-Windows-Security-Auditing" and (eventid=529 or</div>
<div class="t" style="left:1125px;top:1079.24px;font-size:25.7px;line-height:25.7px;color:#1c1c1c;">eventid=4625)</div>
<svg class="a" style="left:541px;top:1151.2px;" width="28" height="28" viewBox="0 0 28 28"><rect x="1.2" y="1.2" width="25.6" height="25.6" rx="4" fill="none" stroke="#505050" stroke-width="2.1"/><path d="M6.3 15.8 L12.2 21.5 L21.4 9.4" fill="none" stroke="#505050" stroke-width="2.3"/></svg>
<div class="t" style="left:605px;top:1150.99px;font-size:26px;line-height:26px;color:#1c1c1c;">test alert</div>
<div class="t" style="left:2512px;top:1151.67px;font-size:24.6px;line-height:24.6px;color:#1c1c1c;">Every 5 minutes</div>
<div class="t" style="left:2811px;top:1152.86px;font-size:23.2px;line-height:23.2px;color:#151515;font-weight:700;">13 days ago</div>
<svg class="a" style="left:541px;top:1215.8px;" width="28" height="28" viewBox="0 0 28 28"><rect x="1.2" y="1.2" width="25.6" height="25.6" rx="4" fill="none" stroke="#505050" stroke-width="2.1"/><path d="M6.3 15.8 L12.2 21.5 L21.4 9.4" fill="none" stroke="#505050" stroke-width="2.3"/></svg>
<div class="t" style="left:605px;top:1215.59px;font-size:26px;line-height:26px;color:#1c1c1c;">Trusted Domain</div>
<div class="t" style="left:2512px;top:1216.27px;font-size:24.6px;line-height:24.6px;color:#1c1c1c;">Every 5 minutes</div>
<div class="t" style="left:2811px;top:1217.46px;font-size:23.2px;line-height:23.2px;color:#151515;font-weight:700;">7 days ago</div>
<svg class="a" style="left:541px;top:1281.2px;" width="28" height="28" viewBox="0 0 28 28"><rect x="1.2" y="1.2" width="25.6" height="25.6" rx="4" fill="none" stroke="#505050" stroke-width="2.1"/><path d="M6.3 15.8 L12.2 21.5 L21.4 9.4" fill="none" stroke="#505050" stroke-width="2.3"/></svg>
<div class="t" style="left:605px;top:1280.99px;font-size:26px;line-height:26px;color:#1c1c1c;">Trace Alert</div>
<div class="t" style="left:2512px;top:1281.67px;font-size:24.6px;line-height:24.6px;color:#1c1c1c;">Every 10 minutes</div>
<div class="t" style="left:2811px;top:1282.86px;font-size:23.2px;line-height:23.2px;color:#151515;font-weight:700;">5 days ago</div>
<svg class="a" style="left:541px;top:1347.2px;" width="28" height="28" viewBox="0 0 28 28"><rect x="1.2" y="1.2" width="25.6" height="25.6" rx="4" fill="none" stroke="#505050" stroke-width="2.1"/><path d="M6.3 15.8 L12.2 21.5 L21.4 9.4" fill="none" stroke="#505050" stroke-width="2.3"/></svg>
<div class="t" style="left:605px;top:1346.99px;font-size:26px;line-height:26px;color:#1c1c1c;">Unauthorized Access</div>
<div class="t" style="left:2512px;top:1347.67px;font-size:24.6px;line-height:24.6px;color:#1c1c1c;">Every 24 hours</div>
<div class="t" style="left:2811px;top:1348.86px;font-size:23.2px;line-height:23.2px;color:#151515;font-weight:700;">a month ago</div>
<svg class="a" style="left:541px;top:1431.9px;" width="28" height="28" viewBox="0 0 28 28"><rect x="1.2" y="1.2" width="25.6" height="25.6" rx="4" fill="none" stroke="#505050" stroke-width="2.1"/><path d="M6.3 15.8 L12.2 21.5 L21.4 9.4" fill="none" stroke="#505050" stroke-width="2.3"/></svg>
<div class="t" style="left:605px;top:1431.69px;font-size:26px;line-height:26px;color:#1c1c1c;">Unsuccessful Login Attempts</div>
<div class="t" style="left:2512px;top:1432.37px;font-size:24.6px;line-height:24.6px;color:#1c1c1c;">Every 24 hours</div>
<div class="t" style="left:2811px;top:1433.56px;font-size:23.2px;line-height:23.2px;color:#151515;font-weight:700;">a month ago</div>
<div class="t" style="left:1125px;top:1410.24px;font-size:25.7px;line-height:25.7px;color:#1c1c1c;">logtype="Windows Event Logs" and source CONTAINS "Microsoft-Windows-Security-Auditing" and (eventid=529 or</div>
<div class="t" style="left:1125px;top:1452.24px;font-size:25.7px;line-height:25.7px;color:#1c1c1c;">eventid=4625)</div>
<svg class="a" style="left:541px;top:1533.2px;" width="28" height="28" viewBox="0 0 28 28"><rect x="1.2" y="1.2" width="25.6" height="25.6" rx="4" fill="none" stroke="#505050" stroke-width="2.1"/><path d="M6.3 15.8 L12.2 21.5 L21.4 9.4" fill="none" stroke="#505050" stroke-width="2.3"/></svg>
<div class="t" style="left:605px;top:1532.99px;font-size:26px;line-height:26px;color:#1c1c1c;">User Account Disabled</div>
<div class="t" style="left:2512px;top:1533.67px;font-size:24.6px;line-height:24.6px;color:#1c1c1c;">Every 24 hours</div>
<div class="t" style="left:2811px;top:1534.86px;font-size:23.2px;line-height:23.2px;color:#151515;font-weight:700;">a month ago</div>
<div class="t" style="left:1125px;top:1512.24px;font-size:25.7px;line-height:25.7px;color:#1c1c1c;">logtype="Windows Event Logs" and source CONTAINS "Microsoft-Windows-Security-Auditing" and (eventid=629 or</div>
<div class="t" style="left:1125px;top:1554.24px;font-size:25.7px;line-height:25.7px;color:#1c1c1c;">eventid=4725)</div>
<div class="a" style="left:520px;top:1599px;width:2534px;height:1px;background:#7a7a7a;"></div>
<div class="a" style="left:3054px;top:781px;width:8px;height:857px;background:rgb(44,52,64);border-radius:4px;"></div>
<div class="a" style="left:627px;top:61px;width:1800px;height:1326px;background:#fff;border-radius:14px;box-shadow:0 5px 26px rgba(0,0,0,0.6);border:1px solid #d9d9d9;"></div>
<div class="t" style="left:661.6px;top:99.52px;font-size:36px;line-height:36px;color:#333;">Bulk Action</div>
<svg class="a" style="left:2370px;top:107px;" width="24" height="24" viewBox="0 0 24 24"><path d="M1.5 1.5 L22.5 22.5 M22.5 1.5 L1.5 22.5" stroke="#9c9c9c" stroke-width="3.2"/></svg>
<div class="a" style="left:628px;top:172.5px;width:1798px;height:1.5px;background:#e2e2e2;"></div>
<div class="t" style="left:1116px;top:236.91px;font-size:25.5px;line-height:25.5px;color:#333;">Alerts</div>
<div class="a" style="left:1242px;top:208.6px;width:1082px;height:565px;border:1.5px solid #dedede;border-radius:6px;"></div>
<div class="a" style="left:1263px;top:230.7px;width:556px;height:63.3px;border:1.5px solid #c8c8c8;border-radius:8px;"></div>
<svg class="a" style="left:1278px;top:249px;" width="28" height="28" viewBox="0 0 28 28"><circle cx="11" cy="11" r="8.3" fill="none" stroke="#b8b8b8" stroke-width="2.6"/><line x1="17" y1="17" x2="24" y2="24" stroke="#b8b8b8" stroke-width="2.8" stroke-linecap="round"/></svg>
<div class="t" style="left:1315px;top:247.69px;font-size:26px;line-height:26px;color:#b5b5b5;">Search</div>
<div class="t" style="left:1263.5px;top:319.41px;font-size:25.5px;line-height:25.5px;color:#3268d0;">Select All</div>
<div class="a" style="left:1243px;top:371.5px;width:1079px;height:1.5px;background:#e2e2e2;"></div>
<div class="a" style="left:1243px;top:373px;width:1079px;height:399px;overflow:hidden;">
<div class="t" style="left:66px;top:26.99px;font-size:26px;line-height:26px;color:#333;">automation al...</div>
<div class="t" style="left:334px;top:26.99px;font-size:26px;line-height:26px;color:#333;">Automation Log</div>
<div class="t" style="left:602px;top:26.99px;font-size:26px;line-height:26px;color:#333;">Automation Lo...</div>
<div class="t" style="left:871px;top:26.99px;font-size:26px;line-height:26px;color:#333;">Automation Lo...</div>
<div class="t" style="left:66px;top:84.99px;font-size:26px;line-height:26px;color:#333;">Automation Lo...</div>
<div class="t" style="left:334px;top:84.99px;font-size:26px;line-height:26px;color:#333;">automation te...</div>
<div class="t" style="left:602px;top:84.99px;font-size:26px;line-height:26px;color:#333;">automation te...</div>
<div class="t" style="left:871px;top:84.99px;font-size:26px;line-height:26px;color:#333;">automation te...</div>
<div class="t" style="left:66px;top:142.99px;font-size:26px;line-height:26px;color:#333;">automation tre...</div>
<div class="t" style="left:334px;top:142.99px;font-size:26px;line-height:26px;color:#333;">Average KPI</div>
<div class="t" style="left:602px;top:142.99px;font-size:26px;line-height:26px;color:#333;">avgCountDis</div>
<svg class="a" style="left:836px;top:146px;" width="23" height="19" viewBox="0 0 23 19"><path d="M2 10 L7.8 15.8 L20.8 3" fill="none" stroke="#333" stroke-width="3" stroke-linecap="round" stroke-linejoin="round"/></svg>
<div class="t" style="left:871px;top:142.99px;font-size:26px;line-height:26px;color:#333;">Bad Disk Secto...</div>
<div class="t" style="left:66px;top:200.99px;font-size:26px;line-height:26px;color:#333;">Before Cont Al...</div>
<div class="t" style="left:334px;top:200.99px;font-size:26px;line-height:26px;color:#333;">Before TEst</div>
<div class="t" style="left:602px;top:200.99px;font-size:26px;line-height:26px;color:#333;">Blocked IP</div>
<div class="t" style="left:871px;top:200.99px;font-size:26px;line-height:26px;color:#333;">Breached pass...</div>
<svg class="a" style="left:31px;top:262px;" width="23" height="19" viewBox="0 0 23 19"><path d="M2 10 L7.8 15.8 L20.8 3" fill="none" stroke="#333" stroke-width="3" stroke-linecap="round" stroke-linejoin="round"/></svg>
<div class="t" style="left:66px;top:258.99px;font-size:26px;line-height:26px;color:#333;">Chassis Intrusi...</div>
<div class="t" style="left:334px;top:258.99px;font-size:26px;line-height:26px;color:#333;">cntDisGrp</div>
<svg class="a" style="left:567px;top:262px;" width="23" height="19" viewBox="0 0 23 19"><path d="M2 10 L7.8 15.8 L20.8 3" fill="none" stroke="#333" stroke-width="3" stroke-linecap="round" stroke-linejoin="round"/></svg>
<div class="t" style="left:602px;top:258.99px;font-size:26px;line-height:26px;color:#333;">Computer Acc...</div>
<div class="t" style="left:871px;top:258.99px;font-size:26px;line-height:26px;color:#333;">count distinct ...</div>
<div class="t" style="left:66px;top:316.99px;font-size:26px;line-height:26px;color:#333;">CountAlertAut...</div>
<div class="t" style="left:334px;top:316.99px;font-size:26px;line-height:26px;color:#333;">CountAlertAut...</div>
<div class="t" style="left:602px;top:316.99px;font-size:26px;line-height:26px;color:#333;">CountAlertAut...</div>
<div class="t" style="left:871px;top:316.99px;font-size:26px;line-height:26px;color:#333;">CountAlertAut...</div>
<div class="t" style="left:66px;top:374.99px;font-size:26px;line-height:26px;color:#333;">CountAlertAut...</div>
<div class="t" style="left:334px;top:374.99px;font-size:26px;line-height:26px;color:#333;">CountAlertAut...</div>
<div class="t" style="left:602px;top:374.99px;font-size:26px;line-height:26px;color:#333;">CountAlertAut...</div>
<div class="t" style="left:871px;top:374.99px;font-size:26px;line-height:26px;color:#333;">CountAlertAut...</div>
</div>
<div class="a" style="left:2315px;top:462.6px;width:8px;height:90.4px;background:#6b7591;border-radius:4px;"></div>
<div class="a" style="left:927px;top:801.6px;width:1183px;height:344px;border:3px solid #3c3fcf;"></div>
<div class="t" style="left:978px;top:827.07px;font-size:25.9px;line-height:25.9px;color:#333;">Check Frequency</div>
<div class="a" style="left:1242px;top:805.4px;width:599px;height:62.4px;border:1.5px solid #cfcfcf;border-radius:8px;"></div>
<div class="t" style="left:1251.7px;top:826.73px;font-size:24.3px;line-height:24.3px;color:#333;">Every 1 minutes</div>
<svg class="a" style="left:1799px;top:831px;" width="18" height="11" viewBox="0 0 18 11"><path d="M0.5 0.5 L17.5 0.5 L9 10 Z" fill="#555"/></svg>
<div class="t" style="left:962px;top:895.58px;font-size:25.3px;line-height:25.3px;color:#333;">User Alert Group</div>
<svg class="a" style="left:1156px;top:895px;" width="26" height="26" viewBox="0 0 26 26"><circle cx="13" cy="13" r="10.5" fill="none" stroke="#333" stroke-width="1.8"/><rect x="12" y="11" width="2.2" height="8" fill="#333"/><circle cx="13.1" cy="7.8" r="1.4" fill="#333"/></svg>
<svg class="a" style="left:1242px;top:896.1px;" width="28" height="30" viewBox="0 0 28 30"><rect x="0.75" y="0.75" width="26.5" height="28" rx="3.5" fill="#fff" stroke="#a2a2a2" stroke-width="1.5"/><path d="M7 15 L12 20 L21 9" fill="none" stroke="#a0a0a0" stroke-width="2.2"/></svg>
<div class="t" style="left:1284.7px;top:897.99px;font-size:26px;line-height:26px;color:#333;">Network team</div>
<svg class="a" style="left:1541px;top:897.6px;" width="28" height="28" viewBox="0 0 28 28"><rect x="0.75" y="0.75" width="26.5" height="26.5" rx="3" fill="#fff" stroke="#c6c6c6" stroke-width="1.5"/></svg>
<div class="t" style="left:1585px;top:897.99px;font-size:26px;line-height:26px;color:#333;">Admin Group</div>
<svg class="a" style="left:1842px;top:897.6px;" width="28" height="28" viewBox="0 0 28 28"><rect x="0.75" y="0.75" width="26.5" height="26.5" rx="3" fill="#fff" stroke="#c6c6c6" stroke-width="1.5"/></svg>
<div class="t" style="left:1884px;top:897.99px;font-size:26px;line-height:26px;color:#333;">Application T ...</div>
<svg class="a" style="left:1242px;top:965.6px;" width="28" height="28" viewBox="0 0 28 28"><rect x="0.75" y="0.75" width="26.5" height="26.5" rx="3" fill="#fff" stroke="#c6c6c6" stroke-width="1.5"/></svg>
<div class="t" style="left:1284.7px;top:966.99px;font-size:26px;line-height:26px;color:#333;">Applog Defaul ...</div>
<svg class="a" style="left:1541px;top:965.6px;" width="28" height="28" viewBox="0 0 28 28"><rect x="0.75" y="0.75" width="26.5" height="26.5" rx="3" fill="#fff" stroke="#c6c6c6" stroke-width="1.5"/></svg>
<div class="t" style="left:1585px;top:966.99px;font-size:26px;line-height:26px;color:#333;">Admin Alerts</div>
<svg class="a" style="left:1842px;top:965.6px;" width="28" height="28" viewBox="0 0 28 28"><rect x="0.75" y="0.75" width="26.5" height="26.5" rx="3" fill="#fff" stroke="#c6c6c6" stroke-width="1.5"/></svg>
<div class="t" style="left:1884px;top:966.99px;font-size:26px;line-height:26px;color:#333;">AppLogs Alert</div>
<svg class="a" style="left:1242px;top:1034.5px;" width="28" height="28" viewBox="0 0 28 28"><rect x="0.75" y="0.75" width="26.5" height="26.5" rx="3" fill="#fff" stroke="#c6c6c6" stroke-width="1.5"/></svg>
<div class="t" style="left:1284.7px;top:1035.99px;font-size:26px;line-height:26px;color:#333;">Applog Schedu ...</div>
<svg class="a" style="left:1541px;top:1034.5px;" width="28" height="28" viewBox="0 0 28 28"><rect x="0.75" y="0.75" width="26.5" height="26.5" rx="3" fill="#fff" stroke="#c6c6c6" stroke-width="1.5"/></svg>
<div class="t" style="left:1585px;top:1035.99px;font-size:26px;line-height:26px;color:#333;">AppLogs Alert ...</div>
<svg class="a" style="left:1842px;top:1034.5px;" width="28" height="28" viewBox="0 0 28 28"><rect x="0.75" y="0.75" width="26.5" height="26.5" rx="3" fill="#fff" stroke="#c6c6c6" stroke-width="1.5"/></svg>
<div class="t" style="left:1884px;top:1035.99px;font-size:26px;line-height:26px;color:#333;">Zylker</div>
<svg class="a" style="left:1242px;top:1104.4px;" width="28" height="28" viewBox="0 0 28 28"><rect x="0.75" y="0.75" width="26.5" height="26.5" rx="3" fill="#fff" stroke="#c6c6c6" stroke-width="1.5"/></svg>
<div class="t" style="left:1284.7px;top:1106.69px;font-size:26px;line-height:26px;color:#333;">Network Team</div>
<svg class="a" style="left:1541px;top:1104.4px;" width="28" height="28" viewBox="0 0 28 28"><rect x="0.75" y="0.75" width="26.5" height="26.5" rx="3" fill="#fff" stroke="#c6c6c6" stroke-width="1.5"/></svg>
<div class="t" style="left:1585px;top:1106.69px;font-size:26px;line-height:26px;color:#333;">Pavithrun</div>
<svg class="a" style="left:1842px;top:1104.4px;" width="28" height="28" viewBox="0 0 28 28"><rect x="0.75" y="0.75" width="26.5" height="26.5" rx="3" fill="#fff" stroke="#c6c6c6" stroke-width="1.5"/></svg>
<div class="t" style="left:1884px;top:1106.69px;font-size:26px;line-height:26px;color:#333;">sampleAlertGr ...</div>
<div class="a" style="left:669px;top:1179.2px;width:1717px;height:52.5px;background:#fdf6e3;"></div>
<div class="t" style="left:679.6px;top:1194.10px;font-size:23.5px;line-height:23.5px;color:#8c6e3a;">Check frequency and User Alert Groups are different for different alerts. The chosen values will be applied to the selected alerts.</div>
<div class="a" style="left:628px;top:1271.5px;width:1798px;height:1.5px;background:#e2e2e2;"></div>
<div class="a" style="left:645px;top:1279px;width:122px;height:93px;border:3px solid #3c3fcf;"></div>
<div class="a" style="left:659px;top:1304px;width:85px;height:52.6px;background:#21874d;border-radius:7px;"></div>
<div class="t" style="left:675.3px;top:1319.76px;font-size:22.6px;line-height:22.6px;color:#fff;font-weight:700;">Save</div>
<div class="a" style="left:2285px;top:1305px;width:110px;height:46.5px;background:#dedede;border-radius:6px;"></div>
<div class="t" style="left:2301.5px;top:1315.83px;font-size:25px;line-height:25px;color:#333;">Cancel</div></body></html>
